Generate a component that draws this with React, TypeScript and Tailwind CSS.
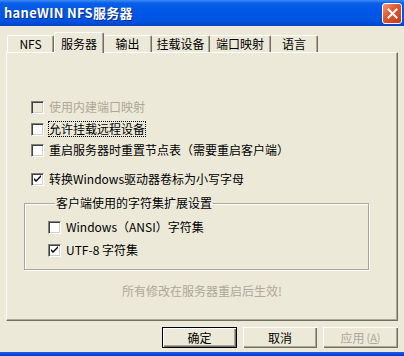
import React from 'react';

const font = 'font-["SimSun","Noto_Sans_CJK_SC",sans-serif]';

const CheckMark = () => (
  <svg width="9" height="9" viewBox="0 0 9 9" className="block">
    <path d="M1 3 L1 5 L3 7 L8 2 L8 0 L3 5 Z" fill="#000" />
  </svg>
);

const Checkbox = ({
  checked = false,
  disabled = false,
}: {
  checked?: boolean;
  disabled?: boolean;
}) => (
  <span
    className={`w-[13px] h-[13px] shrink-0 flex items-center justify-center border border-t-[#808080] border-l-[#808080] border-b-white border-r-white shadow-[inset_1px_1px_0_#404040,inset_-1px_-1px_0_#d4d0c8] ${
      disabled ? 'bg-[#ECE9D8]' : 'bg-white'
    }`}
  >
    {checked && <CheckMark />}
  </span>
);

const CheckRow = ({
  label,
  checked,
  disabled,
  focused,
}: {
  label: React.ReactNode;
  checked?: boolean;
  disabled?: boolean;
  focused?: boolean;
}) => (
  <div className="flex items-center h-[16px] gap-[5px]">
    <Checkbox checked={checked} disabled={disabled} />
    <span
      className={`text-[12px] leading-[14px] whitespace-nowrap ${
        disabled ? 'text-[#ACA899]' : 'text-black'
      } ${focused ? 'outline outline-1 outline-dotted outline-black' : ''}`}
    >
      {label}
    </span>
  </div>
);

const tabs = [
  { label: 'NFS', w: 'w-[47px]' },
  { label: '服务器', w: 'w-[50px]', active: true },
  { label: '输出', w: 'w-[48px]' },
  { label: '挂载设备', w: 'w-[58px]' },
  { label: '端口映射', w: 'w-[61px]' },
  { label: '语言', w: 'w-[47px]' },
];

const Button = ({
  children,
  primary,
  disabled,
}: {
  children: React.ReactNode;
  primary?: boolean;
  disabled?: boolean;
}) => (
  <button
    className={`h-[21px] flex items-center justify-center text-[12px] bg-[#ECE9D8] ${
      primary
        ? 'w-[75px] border border-black shadow-[inset_1px_1px_0_#fff,inset_-1px_-1px_0_#716f64,inset_-2px_-2px_0_#aca899]'
        : 'w-[74px] shadow-[inset_1px_1px_0_#fff,inset_-1px_-1px_0_#716f64,inset_-2px_-2px_0_#aca899]'
    } ${disabled ? 'text-[#ACA899] w-[75px]' : 'text-black'}`}
  >
    {children}
  </button>
);

export default function App() {
  return (
    <div
      className={`w-[404px] h-[356px] bg-[#ECE9D8] flex flex-col overflow-hidden ${font}`}
    >
      {/* title bar */}
      <div className="h-[26px] shrink-0 flex items-center bg-[linear-gradient(to_bottom,#3d8bf5_0%,#0a5fe8_12%,#0057e6_45%,#0053e1_80%,#0043c6_100%)]">
        <span className="ml-[4px] text-white font-bold text-[13px] tracking-[0.3px] [text-shadow:1px_1px_0_#0a2a8a]">
          haneWIN NFS服务器
        </span>
        <div className="ml-auto mr-[2px] w-[20px] h-[21px] rounded-[3px] border border-white flex items-center justify-center bg-[linear-gradient(135deg,#f19a7a_0%,#e0552f_45%,#c8391a_100%)]">
          <svg width="11" height="11" viewBox="0 0 11 11">
            <path
              d="M1.5 1.5 L9.5 9.5 M9.5 1.5 L1.5 9.5"
              stroke="#fff"
              strokeWidth="2"
              strokeLinecap="square"
            />
          </svg>
        </div>
      </div>

      {/* tabs */}
      <div className="h-[26px] shrink-0 flex items-end pl-[7px] relative z-10">
        {tabs.map((t) =>
          t.active ? (
            <div
              key={t.label}
              className={`${t.w} h-[21px] -mb-[1px] bg-[#ECE9D8] rounded-t-[2px] border-t border-l border-white border-r border-r-[#716f64] shadow-[inset_-1px_0_0_#aca899] flex items-start pt-[2px] justify-center text-[12px] text-black`}
            >
              {t.label}
            </div>
          ) : (
            <div
              key={t.label}
              className={`${t.w} h-[17px] rounded-t-[2px] border-t border-white ${
                t.label === 'NFS' ? 'border-l' : ''
              } border-r border-r-[#716f64] shadow-[inset_-1px_0_0_#aca899] flex items-center justify-center text-[12px] text-black`}
            >
              {t.label}
            </div>
          )
        )}
      </div>

      {/* panel */}
      <div className="ml-[6px] w-[392px] h-[269px] shrink-0 border border-t-white border-l-white border-r-[#716f64] border-b-[#716f64] shadow-[inset_-1px_-1px_0_#aca899] flex flex-col pl-[24px] pt-[46px]">
        <CheckRow label="使用内建端口映射" disabled />
        <div className="mt-[6px]">
          <CheckRow label="允许挂载远程设备" focused />
        </div>
        <div className="mt-[5px]">
          <CheckRow label="重启服务器时重置节点表（需要重启客户端）" />
        </div>
        <div className="mt-[13px]">
          <CheckRow label="转换Windows驱动器卷标为小写字母" checked />
        </div>

        <fieldset className="mt-[8px] -ml-[7px] w-[345px] border border-[#aca899] shadow-[1px_1px_0_#fff,inset_1px_1px_0_#fff] pl-[23px] pt-[8px] pb-[11px] flex flex-col gap-[7px]">
          <legend className="ml-[7px] px-[1px] text-[12px] leading-[16px] text-black">
            客户端使用的字符集扩展设置
          </legend>
          <CheckRow label="Windows（ANSI）字符集" />
          <CheckRow label="UTF-8 字符集" checked />
        </fieldset>

        <div className="mt-[13px] -ml-[24px] text-center text-[12px] leading-[16px] text-[#ACA899]">
          所有修改在服务器重启后生效!
        </div>
      </div>

      {/* buttons */}
      <div className="mt-[6px] h-[21px] shrink-0 flex justify-end gap-[6px] pr-[6px]">
        <Button primary>确定</Button>
        <Button>取消</Button>
        <Button disabled>
          应用<span className="text-[11px] ml-[2px]">(<span className="underline">A</span>)</span>
        </Button>
      </div>

      <div className="flex-1" />
      <div className="h-[4px] shrink-0 bg-[linear-gradient(to_bottom,#1c5fe4,#0831d9)]" />
    </div>
  );
}
